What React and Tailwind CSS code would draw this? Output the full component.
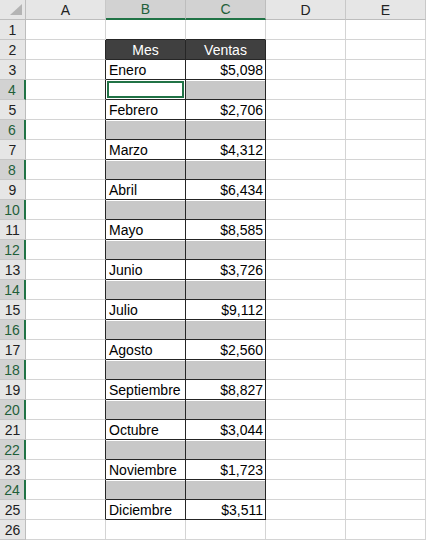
import React from "react";

const datos = {
  3: ["Enero", "$5,098"],
  5: ["Febrero", "$2,706"],
  7: ["Marzo", "$4,312"],
  9: ["Abril", "$6,434"],
  11: ["Mayo", "$8,585"],
  13: ["Junio", "$3,726"],
  15: ["Julio", "$9,112"],
  17: ["Agosto", "$2,560"],
  19: ["Septiembre", "$8,827"],
  21: ["Octubre", "$3,044"],
  23: ["Noviembre", "$1,723"],
  25: ["Diciembre", "$3,511"],
};

const filas = Array.from({ length: 26 }, (_, i) => i + 1);

// filas 4..24 pares = seleccion
const esSel = (r) => r >= 4 && r <= 24 && r % 2 === 0;
const enTabla = (r) => r >= 2 && r <= 25;

const Celda = ({ r, col }) => {
  const tabla = enTabla(r);
  const sel = esSel(r);

  if (r === 1) {
    return <div className="h-[20px] border-r border-r-[#d4d4d4] border-b border-b-[#262626]" />;
  }

  if (r === 2) {
    return (
      <div className="h-[20px] border-r border-b border-[#262626] bg-[#404040] text-white flex items-center justify-center pt-[2px]">
        {col === "B" ? "Mes" : "Ventas"}
      </div>
    );
  }

  if (r === 4 && col === "B") {
    return (
      <div className="h-[20px] border-r border-b border-[#262626] bg-white p-px">
        <div className="h-full border-2 border-[#217346]" />
      </div>
    );
  }

  if (sel) {
    return (
      <div className="h-[20px] border-r border-b border-[#262626] bg-white pt-px">
        <div className="h-full bg-[#c8c8c8]" />
      </div>
    );
  }

  const fila = datos[r];
  return (
    <div
      className={`h-[20px] border-r border-b ${tabla ? "border-[#262626]" : "border-[#d4d4d4]"} flex items-center pt-[2px] ${
        col === "B" ? "justify-start pl-[3px]" : "justify-end pr-[2px]"
      } text-black`}
    >
      {fila ? (col === "B" ? fila[0] : fila[1]) : null}
    </div>
  );
};

export default function App() {
  return (
    <div className="w-[426px] h-[540px] overflow-hidden bg-white font-['Liberation_Sans',Arial,sans-serif] text-[14px]">
      <div className="grid grid-cols-[26px_repeat(5,80px)]">
        {/* encabezados de columna */}
        <div className="h-[20px] bg-[#e6e6e6] border-r border-b border-[#bdbdbd] flex items-end justify-end pr-[3px] pb-[4px]">
          <svg width="12" height="11" viewBox="0 0 12 11">
            <polygon points="12,0 12,11 0,11" fill="#b4b4b4" />
          </svg>
        </div>
        {["A", "B", "C", "D", "E"].map((c) => {
          const s = c === "B" || c === "C";
          return (
            <div
              key={c}
              className={`h-[20px] border-r flex items-center justify-center text-[14px] pt-px ${
                s
                  ? "bg-[#d2d2d2] border-r-[#bdbdbd] border-b-2 border-b-[#217346] text-[#1f5f3a]"
                  : "bg-[#e6e6e6] border-r-[#c8c8c8] border-b border-b-[#bdbdbd] text-[#222]"
              }`}
            >
              {c}
            </div>
          );
        })}

        {filas.map((r) => {
          const sel = esSel(r);
          return (
            <React.Fragment key={r}>
              <div
                className={`h-[20px] border-b border-b-[#c6c6c6] flex items-center justify-center text-[14px] pt-px ${
                  sel
                    ? "bg-[#d2d2d2] border-r-2 border-r-[#217346] text-[#1f5f3a]"
                    : "bg-[#e6e6e6] border-r border-r-[#bdbdbd] text-[#222]"
                }`}
              >
                {r}
              </div>
              <div
                className={`h-[20px] border-r border-b border-b-[#d4d4d4] ${
                  enTabla(r) ? "border-r-[#262626]" : "border-r-[#d4d4d4]"
                }`}
              />
              <Celda r={r} col="B" />
              <Celda r={r} col="C" />
              <div className="h-[20px] border-r border-b border-[#d4d4d4]" />
              <div className="h-[20px] border-r border-b border-[#d4d4d4]" />
            </React.Fragment>
          );
        })}
      </div>
    </div>
  );
}
